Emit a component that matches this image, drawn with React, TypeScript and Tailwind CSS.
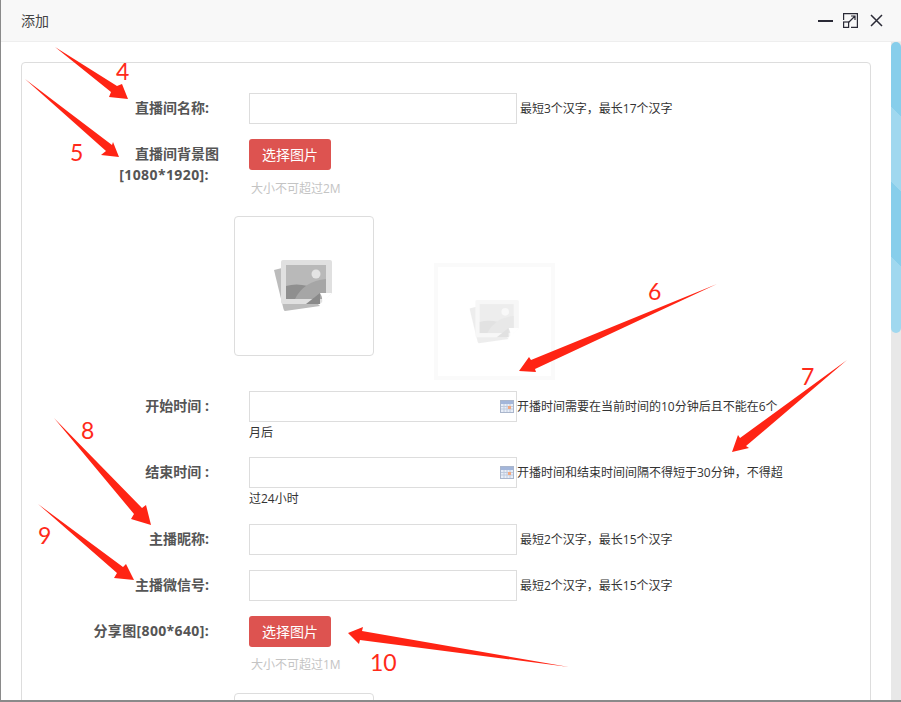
const Arrows = () => {
  const arrows = [
    "54,47 116,86 121,84 127,99 108,97 110,92",
    "24,79 111,145 112,142 118,157 100,155 105,151",
    "716,284 530,360 528,357 518,371 535,372 534,369",
    "846,360 739,438 737,435 731,452 748,448 745,446",
    "53,418 141,508 145,505 150,525 130,519 133,514",
    "37,504 122,567 125,564 133,580 113,578 116,573",
    "568,667 361,631 362,627 347,633 358,644 359,640",
  ]
  return (
    <svg className="absolute left-0 top-0 pointer-events-none" width="901" height="702" viewBox="0 0 901 702">
      {arrows.map((points) => (
        <polygon key={points} points={points} fill="#ff2414" />
      ))}
    </svg>
  )
}

const Mark = ({ text, className }: { text: string; className: string }) => (
  <span className={`absolute text-[23px] leading-[26px] text-[#ff2a1a] font-['Lato',sans-serif] ${className}`}>{text}</span>
)

const PictureIcon = () => (
  <svg width="60" height="56" viewBox="0 0 60 56">
    <path d="M0 12 L8 10 L46 48 L11 53 Q10 53 9.500 51 Z" fill="#bcbcbc" />
    <path d="M9 2 H56 Q58 2 58 4 V35 L46 46 H9 Q7 46 7 44 V4 Q7 2 9 2 Z" fill="#e0e0e0" />
    <rect x="12" y="7" width="40" height="34" fill="#b9b9b9" />
    <circle cx="42" cy="16" r="4.500" fill="#e4e4e4" />
    <path d="M12 41 V28 Q22 25 34 28 L26 41 Z" fill="#8f8f8f" />
    <path d="M21 41 Q30 23 52 21 V41 Z" fill="#a6a6a6" />
    <path d="M32 46 L46 35 V46 Z" fill="#8a8a8a" />
    <path d="M46 35 H58 L48 45 Q49 40 46 35 Z" fill="#ffffff" />
  </svg>
)

const CalendarIcon = () => (
  <svg className="absolute right-[3px] top-[9px]" width="14" height="13" viewBox="0 0 14 13">
    <rect x="0.500" y="0.500" width="13" height="12" fill="#e8eef8" stroke="#aab6cc" />
    <rect x="1" y="1" width="12" height="3" fill="#a3b6da" />
    <path d="M1 6.500H13M1 9H13M4 4V12M7 4V12M10 4V12" stroke="#c0cbde" />
    <rect x="8" y="6" width="3" height="3" fill="#f2a880" />
  </svg>
)

const Row = ({ label, className = "", children }: { label: React.ReactNode; className?: string; children: React.ReactNode }) => (
  <div className={`flex ${className}`}>
    <label className="w-[187px] shrink-0 text-right text-sm font-bold leading-[29px] text-[#555]">{label}</label>
    <div className="ml-[40px] w-[540px] text-xs text-[#333]">{children}</div>
  </div>
)

const TextInput = ({ calendar = false }: { calendar?: boolean }) => (
  <span className="relative inline-block align-middle">
    <input className="block h-[31px] w-[268px] border border-[#ddd] bg-white" />
    {calendar && <CalendarIcon />}
  </span>
)

const PickButton = () => (
  <button className="block h-[31px] w-[82px] rounded-[3px] bg-[#dd5350] text-sm text-white">选择图片</button>
)

const PictureBox = () => (
  <div className="flex h-[140px] w-[140px] items-center justify-center rounded-[4px] border border-[#ddd] bg-white">
    <PictureIcon />
  </div>
)

export default function App() {
  return (
    <div className="relative flex h-[702px] w-[901px] flex-col overflow-hidden border-b-2 border-l border-[#8a8a8a] bg-white font-['Open_Sans','Noto_Sans_CJK_SC',sans-serif]">
      <div className="flex h-[42px] shrink-0 items-center justify-between border-b border-[#eee] bg-[#f8f8f8] pl-5 pr-[18px]">
        <span className="text-sm text-[#444]">添加</span>
        <div className="flex items-center text-[#2a2a36]">
          <svg width="15" height="14" viewBox="0 0 15 14">
            <rect x="0" y="6" width="15" height="2" fill="currentColor" />
          </svg>
          <svg className="ml-[10px]" width="15" height="15" viewBox="0 0 15 15" fill="none" stroke="currentColor" strokeWidth="1.200">
            <path d="M0.600 7V0.600H14.400V14.400H8M5.500 9.500L12 3M8 3H12V7" />
            <rect x="0.600" y="9" width="5" height="5.400" />
          </svg>
          <svg className="ml-[12px]" width="13" height="13" viewBox="0 0 13 13" fill="none" stroke="currentColor" strokeWidth="1.500">
            <path d="M1 1L12 12M12 1L1 12" />
          </svg>
        </div>
      </div>

      <div className="flex min-h-0 flex-1">
        <div className="min-w-0 flex-1 px-5 pt-5">
          <div className="h-[800px] rounded-[4px] border border-[#ddd] pt-[30px]">
            <Row label="直播间名称:">
              <TextInput />
              <span className="ml-[3px] align-middle">最短3个汉字，最长17个汉字</span>
            </Row>

            <Row
              className="mt-[15px]"
              label={
                <span className="block pt-[4px] leading-[21px]">
                  <span className="-mr-[10px] block">直播间背景图</span>
                  <span className="tracking-[0.4px]">[1080*1920]:</span>
                </span>
              }
            >
              <PickButton />
              <p className="ml-[2px] mt-[9px] leading-[20px] text-[#c4c4c4]">大小不可超过2M</p>
              <div className="-ml-[15px] mt-[17px]">
                <PictureBox />
              </div>
            </Row>

            <Row className="mt-[35px]" label="开始时间 :">
              <div className="leading-[21px]">
                <TextInput calendar />
                <span className="align-middle">开播时间需要在当前时间的10分钟后且不能在6个</span>
                <br />
                月后
              </div>
            </Row>

            <Row className="mt-[14px]" label="结束时间 :">
              <div className="leading-[21px]">
                <TextInput calendar />
                <span className="align-middle">开播时间和结束时间间隔不得短于30分钟，不得超</span>
                <br />
                过24小时
              </div>
            </Row>

            <Row className="mt-[15px]" label="主播昵称:">
              <TextInput />
              <span className="ml-[3px] align-middle">最短2个汉字，最长15个汉字</span>
            </Row>

            <Row className="mt-[15px]" label="主播微信号:">
              <TextInput />
              <span className="ml-[3px] align-middle">最短2个汉字，最长15个汉字</span>
            </Row>

            <Row className="mt-[15px]" label={<span className="tracking-[0.35px]">分享图[800*640]:</span>}>
              <PickButton />
              <p className="ml-[2px] mt-[8px] leading-[20px] text-[#c4c4c4]">大小不可超过1M</p>
              <div className="-ml-[15px] mt-[18px]">
                <PictureBox />
              </div>
            </Row>
          </div>
        </div>

        <div className="w-[10px] shrink-0 bg-[#e8e8e8]">
          <div className="h-[291px] rounded-[5px] bg-[repeating-linear-gradient(225deg,#87ceeb_0,#87ceeb_53px,#a0d8ef_53px,#a0d8ef_106px)]" />
        </div>
      </div>

      <div className="absolute left-[433px] top-[263px] flex h-[117px] w-[121px] items-center justify-center border-4 border-[#fafafa]">
        <div className="scale-[0.85] opacity-25">
          <PictureIcon />
        </div>
      </div>

      <Arrows />
      <Mark text="4" className="left-[115px] top-[58px]" />
      <Mark text="5" className="left-[69px] top-[139px]" />
      <Mark text="6" className="left-[647px] top-[278px]" />
      <Mark text="7" className="left-[800px] top-[363px]" />
      <Mark text="8" className="left-[80px] top-[417px]" />
      <Mark text="9" className="left-[37px] top-[522px]" />
      <Mark text="10" className="left-[369px] top-[649px]" />
    </div>
  )
}
